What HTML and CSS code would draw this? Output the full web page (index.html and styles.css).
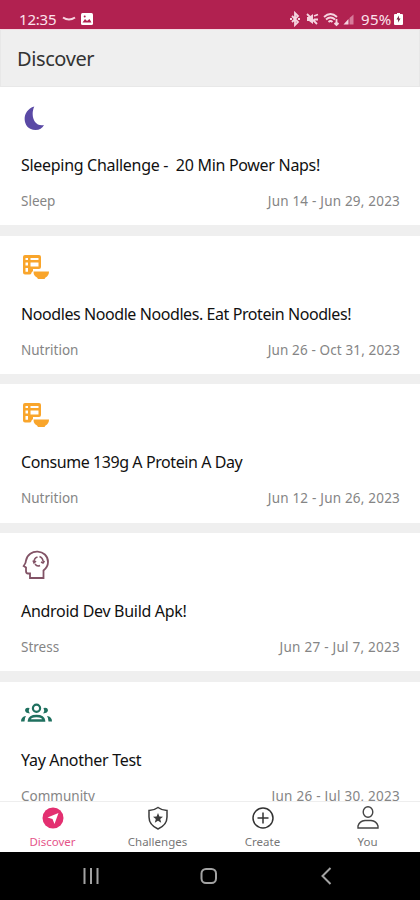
FILE: index.html
```
<!DOCTYPE html>
<html lang="en">
<head>
<meta charset="utf-8">
<title>Discover</title>
<link rel="stylesheet" href="styles.css">
</head>
<body>
<svg class="defs" width="0" height="0">
  <symbol id="food" viewBox="0 0 28 26">
    <path fill="#f9a52b" fill-rule="evenodd" d="M4 0H18Q20 0 20 2V12Q20 14 18 14H12V16L10.500 17.500V18Q10 19.500 8.500 19.500H4Q2 19.500 2 17.500V2Q2 0 4 0ZM4.500 3V5H7V3ZM9.500 3V5H17.500V3ZM4.500 7.500V10.500H7V7.500ZM9.500 7.500V11.500H17.500V7.500ZM4.500 13V16.800H7V13Z"/>
    <path fill="#f9a52b" d="M12.500 16.500H28Q28 20.500 24.500 22.500L23.500 24H17L16 22.500Q12.500 21 12.500 16.500Z"/>
  </symbol>
</svg>
<div class="screen">
  <header class="status">
    <span class="clock">12:35</span>
    <svg class="smile" width="14" height="8" viewBox="0 0 14 8"><path d="M1 2.500Q7 6.500 13 2.500" fill="none" stroke="#f7d3e0" stroke-width="2"/></svg>
    <svg class="photo" width="12" height="12" viewBox="0 0 12 12"><rect width="12" height="12" rx="1.500" fill="#fff"/><path d="M1.500 9.500L4 6L6 8L8.500 6L10.500 9.500Z" fill="#b12150"/><circle cx="3.700" cy="3.500" r="1" fill="#b12150"/></svg>
    <svg class="signals" width="68" height="16" viewBox="0 0 68 16" fill="none" stroke="#f5d5e0" stroke-width="1.800">
      <path d="M4 5L10 11L7 14V2L10 5L4 11M2 8H4M10 8H12"/>
      <path d="M19 6H21L25 3V13L21 10H19Z" fill="#f5d5e0" stroke="none"/><path d="M19 3L29 13M26 5L30 3.500M26 8.500H30"/>
      <path d="M36 6Q42.500 0 49 6M38 8.500Q42.500 4.500 47 8.500M40.500 11Q42.500 9 44.500 11M48.500 8V14M46.500 12L48.500 14L50.500 12"/>
      <path d="M55.500 13.500L60.500 8V13.500Z" fill="#f5d5e0" stroke="none"/><path d="M61.500 13.500V7L65.500 3.500V13.500Z" fill="#d77b9a" stroke="none"/>
    </svg>
    <span class="percent">95%</span>
    <svg class="battery" width="9" height="12" viewBox="0 0 9 12"><path d="M1 1H3V0H6V1H8Q9 1 9 2V11Q9 12 8 12H1Q0 12 0 11V2Q0 1 1 1Z" fill="#fff"/><path d="M5 2.500L2.500 6.500H4.200L4 9.500L6.500 5.500H4.800Z" fill="#6d1836"/></svg>
  </header>
  <div class="appbar"><h1>Discover</h1></div>
  <main class="feed">
    <article class="card">
      <svg class="icon" width="30" height="28" viewBox="0 0 30 28"><path d="M13.300 1.500C-.5 5.500 1 25 14.500 25Q20.500 25 23 20C13.500 22 9 11 13.300 1.500Z" fill="#5a49a5"/></svg>
      <h2 class="t1">Sleeping Challenge -&nbsp; 20 Min Power Naps!</h2>
      <div class="meta"><span>Sleep</span><span class="d1">Jun 14 - Jun 29, 2023</span></div>
    </article>
    <article class="card">
      <svg class="icon food" width="28" height="26"><use href="#food"/></svg>
      <h2 class="t2">Noodles Noodle Noodles. Eat Protein Noodles!</h2>
      <div class="meta"><span>Nutrition</span><span class="d2">Jun 26 - Oct 31, 2023</span></div>
    </article>
    <article class="card">
      <svg class="icon food" width="28" height="26"><use href="#food"/></svg>
      <h2 class="t2">Consume 139g A Protein A Day</h2>
      <div class="meta"><span>Nutrition</span><span class="d1">Jun 12 - Jun 26, 2023</span></div>
    </article>
    <article class="card">
      <svg class="icon" width="30" height="30" viewBox="0 0 30 30" fill="none" stroke="#825366" stroke-width="1.800"><path d="M9 28V23.500H7Q5 23.500 5 21V17.500L2.700 16Q5 13 5 10.500C7 -2 27 -1 27 12Q27 17 22.500 20.500V28Z"/><path d="M13 12Q13 8 16.500 7M18.500 6.500Q22 8 22 11.500M14 14Q16 17 19 15.500M12 10.500L13 13L15 11M20 12L22 13L23.500 11" stroke-width="1.500"/></svg>
      <h2 class="t1">Android Dev Build Apk!</h2>
      <div class="meta"><span>Stress</span><span class="d3">Jun 27 - Jul 7, 2023</span></div>
    </article>
    <article class="card">
      <svg class="icon" width="31" height="28" viewBox="0 0 31 28" fill="#1f705f"><circle cx="15.500" cy="8.300" r="3.600" fill="none" stroke="#1f705f" stroke-width="2.200"/><path d="M8 20.500Q8.500 16 15.500 16T23 20.500Z" fill="none" stroke="#1f705f" stroke-width="2.400"/><path d="M8.500 8Q4.500 7 4 10Q4 13 8.800 13.500Q7 10.500 8.500 8ZM22.500 8Q26.500 7 27 10Q27 13 22.200 13.500Q24 10.500 22.500 8ZM0 21.500Q0 16.500 5 16Q3.500 18 3.500 21.500ZM31 21.500Q31 16.500 26 16Q27.500 18 27.500 21.500Z"/></svg>
      <h2 class="t1">Yay Another Test</h2>
      <div class="meta"><span>Community</span><span class="d3">Jun 26 - Jul 30, 2023</span></div>
    </article>
  </main>
  <nav class="tabs">
    <div class="tab active"><svg width="24" height="26" viewBox="0 0 24 26"><circle cx="12" cy="13" r="10.500" fill="#e32f70"/><path d="M17.500 8L13.500 19L11.500 14L6.500 12.500Z" fill="#fff"/></svg><span>Discover</span></div>
    <div class="tab"><svg width="24" height="26" viewBox="0 0 24 26"><path d="M12 2.500Q16 5.500 21 5.500V12Q21 20 12 24Q3 20 3 12V5.500Q8 5.500 12 2.500Z" fill="none" stroke="#3b3b3b" stroke-width="1.500"/><path d="M12 8L13.400 11.600L17 11.800L14.200 14.100L15.200 17.700L12 15.700L8.800 17.700L9.800 14.100L7 11.800L10.600 11.600Z" fill="#3b3b3b"/></svg><span>Challenges</span></div>
    <div class="tab"><svg width="24" height="26" viewBox="0 0 24 26" fill="none" stroke="#333" stroke-width="1.500"><circle cx="12" cy="13" r="10"/><path d="M12 7.500V18.500M6.500 13H17.500"/></svg><span>Create</span></div>
    <div class="tab"><svg width="24" height="26" viewBox="0 0 24 26" fill="none" stroke="#444" stroke-width="1.400"><ellipse cx="12" cy="7" rx="4.800" ry="5.300"/><path d="M2 23V21Q3.500 16 9 15.500H15Q20.500 16 22 21V23Z"/></svg><span>You</span></div>
  </nav>
  <footer class="sysnav">
    <svg width="420" height="48" viewBox="0 0 420 48" fill="none" stroke="#a3a3a3" stroke-width="2"><path d="M84.500 16V32M91 16V32M97.500 16V32"/><rect x="201.500" y="17" width="14.500" height="14" rx="4.500"/><path d="M330.500 16L322.500 24L330.500 32"/></svg>
  </footer>
</div>
</body>
</html>
```
FILE: styles.css
```
* { box-sizing: border-box; }
body { margin: 0; font-family: "Noto Sans", sans-serif; background: #fff; }
svg { display: block; flex: none; }
.defs { position: absolute; }
.screen { width: 420px; height: 900px; display: flex; flex-direction: column; overflow: hidden; }
.status { flex: none; height: 29px; background: #b12150; color: #fbe3ec; display: flex; align-items: center; padding: 8px 17px 0 19px; font-size: 15px; line-height: 20px; white-space: nowrap; }
.clock { width: 38px; letter-spacing: -0.2px; }
.smile { margin-left: 5px; }
.photo { margin-left: 5px; }
.signals { margin-left: auto; margin-right: 5px; }
.percent { width: 31px; letter-spacing: 0.3px; }
.battery { margin-left: 2px; }
.appbar { flex: none; height: 58px; background: #efefef; border: 1px solid #e8e8e8; border-top-color: #f4dbe4; padding: 2px 16px 0; display: flex; align-items: center; }
h1 { margin: 0; font-size: 20px; line-height: 28px; font-weight: 400; letter-spacing: -0.4px; color: #333; }
.feed { flex: 1; min-height: 0; overflow: hidden; background: #efefef; display: flex; flex-direction: column; gap: 10.5px; }
.card { flex: none; height: 138.2px; background: #fff; padding: 17px 20px 0 21px; }
.icon { height: 30px; }
.food { height: 26px; margin: 2px 0; }
h2 { margin: 19px 0 0; font-size: 16px; line-height: 24px; font-weight: 400; color: #111; white-space: nowrap; }
.food + h2 { margin-top: 21px; }
.t1 { letter-spacing: -0.3px; }
.t2 { letter-spacing: -0.42px; }
.meta { margin-top: 14px; display: flex; justify-content: space-between; font-size: 13.5px; line-height: 20px; color: #858585; }
.d1 { letter-spacing: 0.2px; }
.d2 { letter-spacing: 0.13px; }
.d3 { letter-spacing: 0.25px; }
.tabs { flex: none; height: 51px; border-top: 1px solid #eee; background: #fff; display: grid; grid-template-columns: repeat(4, 105px); }
.tab { display: flex; flex-direction: column; align-items: center; padding-top: 3px; font-size: 11.5px; line-height: 16px; color: #777; }
.tab span { margin-top: 3px; }
.tab.active { color: #e5558a; }
.sysnav { flex: none; height: 48px; background: #000; }
```
